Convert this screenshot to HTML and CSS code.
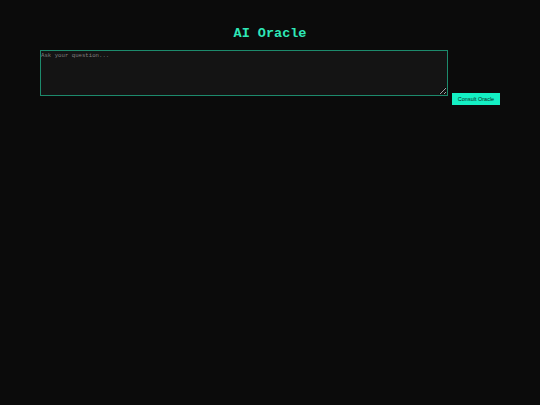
FILE: index.html
```
<!DOCTYPE html>
<html>
<head>
<meta charset="utf-8">
<link rel="stylesheet" href="styles.css">
</head>
<body>
<div class="container">
  <h1 class="title">AI Oracle</h1>
  <div class="ask-row">
    <textarea class="question" placeholder="Ask your question..."></textarea>
    <button class="consult">Consult Oracle</button>
  </div>
</div>
</body>
</html>
```
FILE: styles.css
```
html, body {
  margin: 0;
  padding: 0;
  background: #0b0b0b;
  height: 100%;
}
.container {
  width: 460px;
  margin: 0 auto;
  padding-top: 27px;
}
.title {
  margin: 0 0 9px 0;
  text-align: center;
  font-family: "Liberation Mono", monospace;
  font-weight: bold;
  font-size: 13.5px;
  line-height: 14px;
  color: #2ee8b8;
}
.ask-row {
  display: flex;
  align-items: flex-start;
  gap: 4px;
}
.question {
  box-sizing: border-box;
  width: 408px;
  height: 46px;
  margin: 0;
  padding: 1px 0 0 0;
  background: #141414;
  border: 1px solid #1d8a6c;
  color: #cfcfcf;
  font-family: "Liberation Mono", monospace;
  font-size: 5.7px;
  resize: vertical;
  outline: none;
}
.question::placeholder {
  color: #808080;
}
.consult {
  margin-top: 43px;
  box-sizing: border-box;
  width: 48px;
  height: 12px;
  padding: 0;
  background: #14f0c4;
  border: none;
  color: #0b2a22;
  font-family: "Liberation Sans", sans-serif;
  font-size: 5.5px;
  cursor: pointer;
}
```
